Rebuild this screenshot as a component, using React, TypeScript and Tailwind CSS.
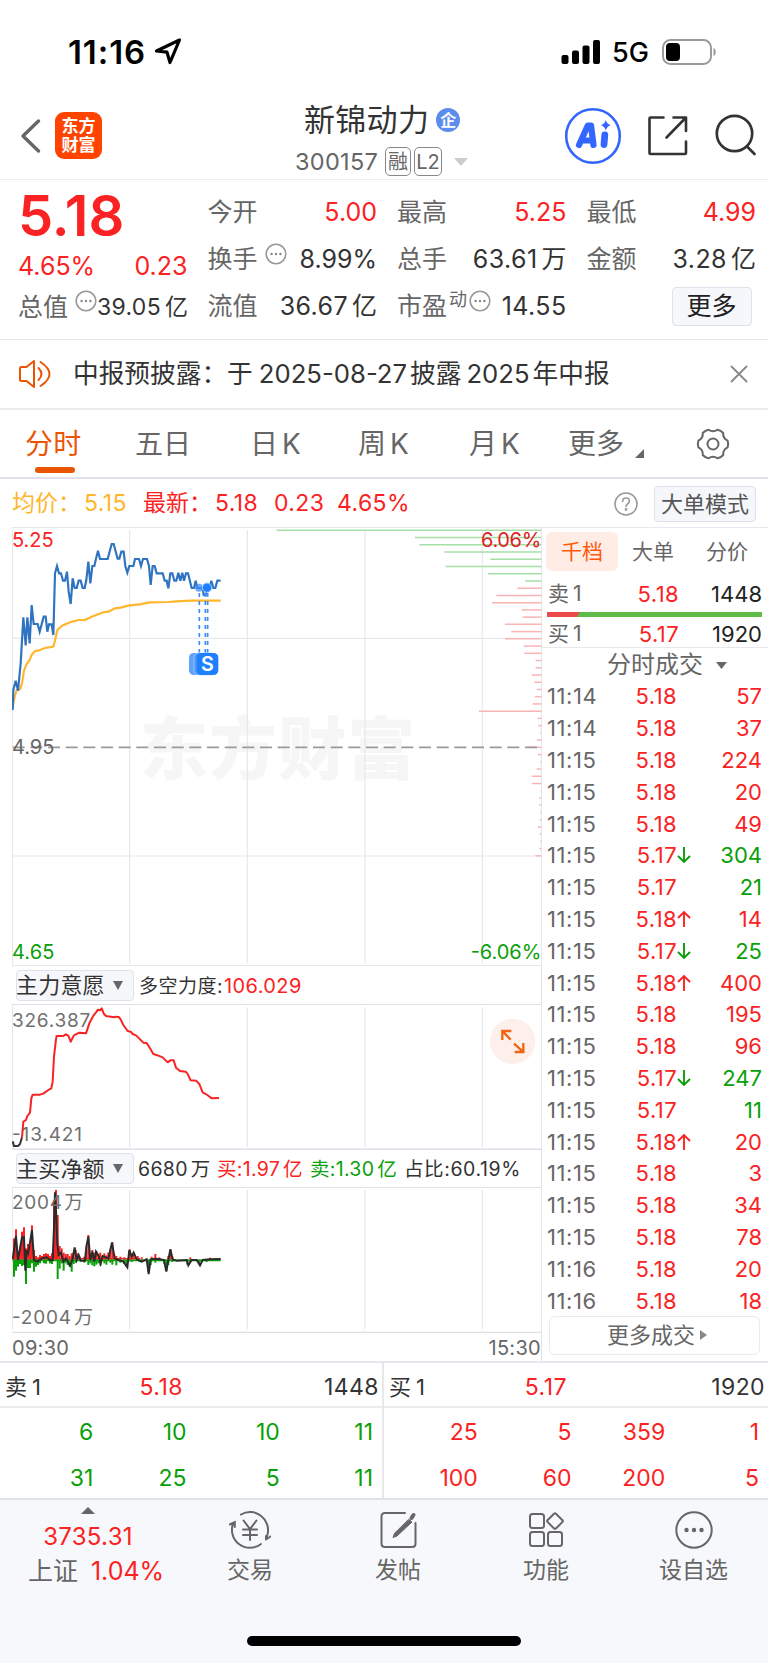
import React from 'react';

type Side = 'red' | 'green';

interface Trade {
  time: string;
  price: string;
  qty: string;
  side: Side;
  dir?: 'up' | 'down';
}

const trades: Trade[] = [
  { time: '11:14', price: '5.18', qty: '57', side: 'red' },
  { time: '11:14', price: '5.18', qty: '37', side: 'red' },
  { time: '11:15', price: '5.18', qty: '224', side: 'red' },
  { time: '11:15', price: '5.18', qty: '20', side: 'red' },
  { time: '11:15', price: '5.18', qty: '49', side: 'red' },
  { time: '11:15', price: '5.17', qty: '304', side: 'green', dir: 'down' },
  { time: '11:15', price: '5.17', qty: '21', side: 'green' },
  { time: '11:15', price: '5.18', qty: '14', side: 'red', dir: 'up' },
  { time: '11:15', price: '5.17', qty: '25', side: 'green', dir: 'down' },
  { time: '11:15', price: '5.18', qty: '400', side: 'red', dir: 'up' },
  { time: '11:15', price: '5.18', qty: '195', side: 'red' },
  { time: '11:15', price: '5.18', qty: '96', side: 'red' },
  { time: '11:15', price: '5.17', qty: '247', side: 'green', dir: 'down' },
  { time: '11:15', price: '5.17', qty: '11', side: 'green' },
  { time: '11:15', price: '5.18', qty: '20', side: 'red', dir: 'up' },
  { time: '11:15', price: '5.18', qty: '3', side: 'red' },
  { time: '11:15', price: '5.18', qty: '34', side: 'red' },
  { time: '11:15', price: '5.18', qty: '78', side: 'red' },
  { time: '11:16', price: '5.18', qty: '20', side: 'red' },
  { time: '11:16', price: '5.18', qty: '18', side: 'red' },
];

const sellQueue = [
  ['6', '10', '10', '11'],
  ['31', '25', '5', '11'],
];
const buyQueue = [
  ['25', '5', '359', '1'],
  ['100', '60', '200', '5'],
];

// Chart data is kept in chart units, three per pixel
const priceLine =
  '38,570 40,510 47,482 54,512 62,430 70,292 77,376 82,292 89,370 95,255 101,312 113,312 119,335 131,290 137,290 142,335 147,313 155,313 160,345 165,160 171,138 177,160 183,160 189,182 195,182 201,155 206,215 212,252 218,175 224,204 230,204 236,182 242,182 248,204 254,204 259,180 265,125 271,190 277,138 283,138 288,116 294,92 300,117 323,117 335,72 341,72 353,116 358,116 364,95 371,95 376,138 382,158 388,138 400,138 405,117 417,117 423,138 429,117 441,117 447,138 452,195 458,138 464,138 470,160 488,160 494,182 500,182 505,205 511,160 517,160 523,182 529,182 535,158 541,182 547,158 552,182 558,160 564,160 575,204 582,204 587,182 592,204 608,204 611,225 617,225 622,204 629,204 634,182 640,204 646,204 652,182 662,182';

const avgLine =
  '38,560 44,530 50,510 60,508 66,490 72,452 80,432 88,422 95,405 105,393 118,391 135,384 160,380 165,362 172,330 185,318 205,309 220,304 235,300 255,300 275,290 310,277 325,275 345,265 362,263 388,256 420,253 430,251 450,247 505,246 530,244 570,242 662,242';

const powerLine =
  '66,592 70,545 78,540 82,528 90,518 94,475 98,464 120,464 130,461 145,450 154,445 158,425 162,350 168,298 170,288 190,288 197,283 205,287 212,305 222,286 238,278 258,280 268,250 280,227 290,215 294,209 300,211 305,205 312,222 318,228 342,232 347,230 356,231 362,238 370,255 383,273 392,275 398,282 408,286 430,308 440,309 450,325 460,342 475,347 488,352 503,367 511,361 521,361 528,383 540,393 557,395 562,400 572,421 588,422 598,432 608,457 622,465 635,475 657,474';

const netLine =
  '38,328 48,258 54,330 66,262 72,262 76,362 80,300 84,310 88,290 96,240 102,330 112,335 125,325 140,322 150,330 158,330 162,230 165,127 168,180 172,280 176,315 183,308 190,335 198,325 210,347 217,330 224,292 230,330 236,315 242,332 255,332 259,290 265,260 271,330 277,305 283,335 288,305 296,318 302,340 308,318 325,325 336,278 344,325 355,330 370,335 382,352 388,300 395,320 401,308 410,328 425,335 440,328 446,372 452,328 465,326 480,328 492,330 499,365 505,330 511,298 518,328 530,332 560,330 565,346 575,330 590,330 600,346 608,330 630,328 662,327';

// left ends of the price distribution bars, one every 21.7 units
const priceDist = [
  830, 1245, 1258, 1333, 1471, 1337, 1464, 1575, 1552, 1489, 1476, 1565, 1567, 1515, 1534, 1515, 1571, 1573, 1607, 1607, 1595,
  1603, 1610, 1605, 1598, 1437, 1612, 1615, 1621, 1611, 1583, 1614, 1621, 1610, 1595, 1596, 1622, 1618, 1618, 1621, 1619, 1614,
  1619, 1621, 1618, 1606,
];

const buyBars = [
  [42, 265], [48, 238], [54, 315], [60, 292], [66, 245], [72, 232], [78, 295], [84, 282], [90, 284], [96, 226], [102, 300],
  [108, 318], [114, 322], [120, 315], [126, 318], [132, 312], [138, 310], [144, 312], [150, 318], [156, 310], [162, 150],
  [168, 120], [173, 195], [179, 288], [185, 295], [191, 308], [197, 312], [203, 312], [209, 318], [215, 310], [221, 308],
  [227, 300], [233, 310], [239, 320], [253, 320], [259, 300], [265, 255], [271, 312], [277, 300], [283, 308], [289, 304],
  [295, 312], [301, 308], [307, 318], [313, 310], [319, 316], [325, 308], [331, 300], [337, 276], [343, 314], [349, 318],
  [361, 320], [373, 322], [389, 298], [395, 316], [401, 308], [413, 318], [425, 322], [455, 320], [466, 312], [478, 322],
  [505, 318], [511, 298], [517, 320], [571, 322], [630, 323],
];

const sellBars = [
  [42, 380], [48, 362], [54, 350], [60, 342], [66, 348], [72, 345], [78, 402], [84, 354], [90, 354], [96, 340], [102, 365],
  [108, 350], [114, 345], [120, 340], [132, 340], [138, 341], [150, 340], [156, 342], [173, 387], [179, 356], [185, 340],
  [191, 362], [197, 340], [203, 345], [209, 350], [215, 365], [221, 342], [227, 338], [253, 338], [265, 345], [271, 340],
  [277, 346], [283, 349], [289, 344], [295, 340], [301, 347], [313, 340], [319, 344], [331, 338], [337, 344], [349, 346],
  [361, 338], [373, 342], [379, 350], [395, 336], [419, 336], [446, 366], [452, 345], [466, 338], [493, 342], [499, 362],
  [505, 345], [517, 336], [562, 344], [571, 336], [598, 342], [620, 336],
];

const Dots: React.FC<{ className?: string }> = ({ className }) => (
  <svg width="22" height="22" viewBox="0 0 22 22" className={className}>
    <circle cx="11" cy="11" r="9.8" fill="none" stroke="#999" strokeWidth="1.6" />
    <circle cx="6.6" cy="11" r="1.2" fill="#888" />
    <circle cx="11" cy="11" r="1.2" fill="#888" />
    <circle cx="15.4" cy="11" r="1.2" fill="#888" />
  </svg>
);

const StatusBar: React.FC = () => (
  <div className="flex h-[100px] items-start justify-between pl-[68px] pr-[51px] pt-[34px]">
    <div className="flex h-[34px] items-center text-black">
      <span className="w-[86px] whitespace-nowrap pt-[2px] text-[33px] font-semibold leading-none tracking-[0.9px]">11:16</span>
      <svg width="28" height="28" viewBox="0 0 28 28">
        <path d="M25.500 3 2.500 14l10.500 1.200L16 25.500z" fill="none" stroke="#000" strokeWidth="3.2" strokeLinejoin="round" />
      </svg>
    </div>
    <div className="flex h-[35px] items-center text-black">
      <svg width="40" height="26" viewBox="0 0 40 26">
        <rect x="0.5" y="16" width="7" height="9" rx="2" />
        <rect x="11" y="11.5" width="7" height="13.5" rx="2" />
        <rect x="21.5" y="6.5" width="7" height="18.5" rx="2" />
        <rect x="32" y="1" width="7" height="24" rx="2" />
      </svg>
      <span className="ml-[11px] w-[50px] pt-[2px] text-[27px] font-medium leading-none">5G</span>
      <svg width="55" height="28" viewBox="0 0 55 28">
        <rect x="1" y="2" width="48" height="24" rx="7.5" fill="none" stroke="#9b9b9b" strokeWidth="2" />
        <rect x="4" y="5" width="14" height="18" rx="4" fill="#000" />
        <path d="M51.500 10v8c3-1 3-7 0-8z" fill="#9b9b9b" />
      </svg>
    </div>
  </div>
);

const Header: React.FC = () => (
  <header className="flex h-20 items-start border-b border-[#ececec] pl-5">
    <svg width="22" height="36" viewBox="0 0 22 36" className="mt-[18px]">
      <path d="M18.500 3 3 18l15.500 15" fill="none" stroke="#666" strokeWidth="3.4" strokeLinecap="round" strokeLinejoin="round" />
    </svg>
    <div className="ml-[13px] mt-3 flex h-[47px] w-[47px] flex-col items-center justify-center rounded-[9px] bg-[#ff4400] text-[17px] font-bold leading-[19px] text-white">
      <span>东方</span>
      <span>财富</span>
    </div>
    <div className="ml-[194px] w-[172px]">
      <div className="flex h-[38px] items-center gap-[7px] pl-[8px]">
        <h1 className="shrink-0 text-[31px] leading-none tracking-[0.3px] text-[#333]">新锦动力</h1>
        <span className="mt-[1px] flex h-6 w-6 shrink-0 items-center justify-center rounded-full bg-[#5b8def] text-[16px] font-bold leading-none text-white">企</span>
      </div>
      <div className="mt-[7px] flex h-[33px] items-center text-[#666]">
        <span className="ml-[-1px] w-[90px] text-[23.5px] leading-none tracking-[0.3px]">300157</span>
        <span className="flex h-[29px] w-[26px] shrink-0 items-center justify-center rounded-[5px] border border-[#888] text-[20px] leading-none">融</span>
        <span className="ml-[3px] flex h-[29px] w-[28px] shrink-0 items-center justify-center rounded-[5px] border border-[#888] text-[20px] leading-none">L2</span>
        <svg width="14" height="8" viewBox="0 0 14 8" className="ml-3 shrink-0">
          <path d="M0 0h14L7 8z" fill="#ccc" />
        </svg>
      </div>
    </div>
    <svg width="58" height="58" viewBox="0 0 58 58" className="ml-[96px] mt-[7px]">
      <circle cx="29" cy="29" r="26.8" fill="none" stroke="#3366ff" strokeWidth="2.6" />
      <path d="M15 38 23.800 18.500h3.200L29.500 38M19.500 33.500h8.500" fill="none" stroke="#3366ff" strokeWidth="6.2" strokeLinejoin="round" strokeLinecap="round" />
      <path d="M40.800 28 40 37.500" stroke="#3366ff" strokeWidth="6.8" strokeLinecap="round" />
      <path d="M41.800 13q1 3.800 4.800 5.200-3.800 1.400-4.800 5.200-1-3.800-4.800-5.200 3.800-1.400 4.800-5.200z" fill="#3366ff" />
    </svg>
    <svg width="42" height="42" viewBox="0 0 42 42" className="ml-[25px] mt-[15px]" fill="none" stroke="#333" strokeWidth="2.6" strokeLinecap="round" strokeLinejoin="round">
      <path d="M16.500 2.500H3.500q-1 0-1 1V38q0 1 1 1H38q1 0 1-1V26.500" />
      <path d="M26.500 2.500H39V16M38.500 3 19.500 22.500" />
    </svg>
    <svg width="44" height="44" viewBox="0 0 44 44" className="ml-[25px] mt-[14px]" fill="none" stroke="#333" strokeWidth="2.7" strokeLinecap="round">
      <circle cx="20.5" cy="19.5" r="17.7" />
      <path d="m33 32.500 7.500 7.500" />
    </svg>
  </header>
);

const Quote: React.FC<{ label: string; value: string; unit?: string; color?: string; children?: React.ReactNode }> = ({
  label,
  value,
  unit,
  color = 'text-[#333] tracking-[0.4px]',
  children,
}) => (
  <div className="flex h-[47px] items-center">
    <span className="text-[25px] leading-none text-[#666]">{label}</span>
    {children}
    <span className={`ml-auto text-[25px] leading-none ${color}`}>
      {value}
      {unit && <span className="ml-[4px] tracking-normal">{unit}</span>}
    </span>
  </div>
);

const QuotePanel: React.FC = () => (
  <section className="grid h-40 grid-cols-4 gap-x-5 border-b border-[#e8e8ea] pl-[18px] pr-[12px] pt-[9px]">
    <div className="text-[25px] leading-none text-[#fa2222]">
      <div className="flex h-[54px] items-center text-[56px] font-semibold">5.18</div>
      <div className="flex h-[46px] items-center justify-between pt-px">
        <span>4.65%</span>
        <span>0.23</span>
      </div>
      <div className="flex h-9 items-center whitespace-nowrap text-[#333]">
        <span className="text-[#666]">总值</span>
        <Dots className="mb-3 ml-[7px] shrink-0" />
        <span className="ml-auto pt-px text-[23px] tracking-[0.3px]">
          39.05<span className="ml-[4px] tracking-normal">亿</span>
        </span>
      </div>
    </div>
    <div>
      <Quote label="今开" value="5.00" color="text-[#fa2222]" />
      <Quote label="换手" value="8.99%" color="text-[#333]">
        <Dots className="mb-3 ml-[7px]" />
      </Quote>
      <Quote label="流值" value="36.67" unit="亿" />
    </div>
    <div>
      <Quote label="最高" value="5.25" color="text-[#fa2222]" />
      <Quote label="总手" value="63.61" unit="万" />
      <Quote label="市盈" value="14.55">
        <span className="mb-[14px] ml-[2px] text-[18px] leading-none text-[#666]">动</span>
        <Dots className="mb-3 ml-[2px]" />
      </Quote>
    </div>
    <div>
      <Quote label="最低" value="4.99" color="text-[#fa2222]" />
      <Quote label="金额" value="3.28" unit="亿" />
      <div className="flex h-[47px] items-center justify-end pr-1">
        <button className="h-[39px] w-20 rounded-[4px] border border-[#dfe2ea] bg-[#f6f7fa] pr-px text-[25px] leading-none text-[#222]">更多</button>
      </div>
    </div>
  </section>
);

const Notice: React.FC = () => (
  <div className="flex h-[70px] items-center border-b-2 border-[#ececf0] pl-[18px] pr-5">
    <svg width="34" height="30" viewBox="0 0 34 30" fill="none" stroke="#ea5504" strokeWidth="2" strokeLinecap="round" strokeLinejoin="round">
      <path d="M2 9.500q0-1.500 1.500-1.500h5L16 2v26l-7.500-6h-5Q2 22 2 20.500z" />
      <path d="M20.500 9q6 6 0 12M22.500 3q18 12 0 24" />
    </svg>
    <p className="ml-[21px] flex text-[25.7px] leading-none text-[#333]">
      <span>中报预披露：于</span>
      <span className="ml-[6px]">2025-08-27</span>
      <span className="ml-[3px]">披露</span>
      <span className="ml-[5px]">2025</span>
      <span className="ml-[3px]">年中报</span>
    </p>
    <svg width="18" height="18" viewBox="0 0 18 18" className="ml-auto">
      <path d="m1.500 1.500 15 15m0-15-15 15" stroke="#888" strokeWidth="1.8" strokeLinecap="round" />
    </svg>
  </div>
);

const Tabs: React.FC = () => (
  <nav className="flex h-[69px] items-center border-b-2 border-[#e0e1e8] pl-[25px] text-[28px] leading-none text-[#666]">
    <div className="flex h-full w-[110px] flex-col">
      <span className="mt-[20px] tracking-[0.3px] text-[#ea5504]">分时</span>
      <span className="ml-[10px] mt-[9px] h-[6px] w-10 shrink-0 rounded-full bg-[#ea5504]" />
    </div>
    <span className="w-[115px]">五日</span>
    <span className="w-[108px]">日<span className="ml-[4px]">K</span></span>
    <span className="w-[111px]">周<span className="ml-[4px]">K</span></span>
    <span className="w-[99px]">月<span className="ml-[4px]">K</span></span>
    <span className="w-[67px]">更多</span>
    <svg width="9" height="9" viewBox="0 0 9 9" className="mt-[20px]">
      <path d="M9 0v9H0z" fill="#666" />
    </svg>
    <svg width="34" height="34" viewBox="-17 -17 34 34" className="ml-[52px]" fill="none" stroke="#666" strokeWidth="2" strokeLinejoin="round">
      <path d="M14.6-3.4Q15.8 0 14.6 3.4Q9.8 5.6 10.2 11Q7.9 13.7 4.4 14.3Q0 11.2 -4.4 14.3Q-7.9 13.7 -10.2 11Q-9.8 5.6 -14.6 3.4Q-15.8 0 -14.6-3.4Q-9.8-5.6 -10.2-11Q-7.9-13.7 -4.4-14.3Q0-11.2 4.4-14.3Q7.9-13.7 10.2-11Q9.8-5.6 14.6-3.4Z" />
      <circle r="5.5" />
    </svg>
  </nav>
);

const InfoRow: React.FC = () => (
  <div className="flex h-[48px] items-center pl-[12px] pr-[12px] pt-px text-[23px] leading-none tracking-[0.4px] text-[#fa2222]">
    <span className="w-[72px] tracking-normal text-[#ffb62e]">均价：</span>
    <span className="w-[59px] text-[#ffb62e]">5.15</span>
    <span className="w-[72px] tracking-normal">最新：</span>
    <span className="w-[59px]">5.18</span>
    <span className="w-[63px]">0.23</span>
    <span>4.65%</span>
    <svg width="24" height="24" viewBox="0 0 24 24" className="ml-auto" fill="none" stroke="#999" strokeWidth="1.6" strokeLinecap="round">
      <circle cx="12" cy="12" r="11" />
      <path d="M8.600 9.500q0-3.500 3.400-3.500t3.400 3.200q0 1.600-1.900 2.800-1.500 1-1.500 2.400" />
      <circle cx="12" cy="17.5" r=".6" fill="#999" />
    </svg>
    <button className="ml-4 h-9 w-[102px] whitespace-nowrap rounded-[4px] border border-[#dfe2ea] bg-[#f6f7fa] text-[22px] leading-none tracking-normal text-[#555]">大单模式</button>
  </div>
);

const PriceChart: React.FC = () => (
  <svg width="530" height="439" viewBox="36 21 1590 1317" className="block">
    <g fill="#f6f6f6" fontSize="204" fontWeight="900">
      <text x="420" y="762" textLength="826">东方财富</text>
    </g>
    <g stroke="#e6e8ee" strokeWidth="3.5" fill="none">
      <path d="M36 22.500H1626M36 1336.500H1626M37.500 21V1338M1624.500 21V1338" />
      <path d="M389 30V1330M742 30V1330M1095 30V1330M1447 30V1330M38 355H1624M38 1008H1624" />
    </g>
    {priceDist.map((x, i) => (
      <path key={i} d={`M${x} ${31 + i * 21.7}H1624`} stroke={i < 8 ? '#a6dfa6' : '#fab4b4'} strokeWidth="4.5" />
    ))}
    <path d="M38 682H1614" stroke="#9a9a9d" strokeWidth="5" strokeDasharray="36 17" />
    <polyline points={avgLine} fill="none" stroke="#ffb62e" strokeWidth="6.5" strokeLinejoin="round" />
    <polyline points={priceLine} fill="none" stroke="#2f74c0" strokeWidth="6.5" />
    <g stroke="#3c8bfa" strokeWidth="5" strokeDasharray="12 12">
      <path d="M598 219V398M616 219V398M623 219V398" />
    </g>
    <circle cx="597" cy="203" r="12" fill="#3c8bfa" opacity=".75" />
    <circle cx="621" cy="203" r="14" fill="#1f80ff" stroke="#a9d0ff" strokeWidth="3" />
    <rect x="567" y="399" width="66" height="66" rx="14" fill="#5fa2fc" />
    <rect x="582" y="399" width="66" height="66" rx="14" fill="#4c97fd" stroke="#b9d8ff" strokeWidth="2" />
    <rect x="590" y="399" width="65" height="66" rx="14" fill="#1f80ff" />
    <text x="622" y="453" fontSize="59" fontWeight="600" fill="#fff" textAnchor="middle">S</text>
    <g fontSize="60">
      <text x="36" y="82" fill="#fa2222" textLength="125">5.25</text>
      <text x="1624" y="82" fill="#e02020" textAnchor="end" textLength="181">6.06%</text>
      <text x="36" y="701" fill="#666" textLength="127">4.95</text>
      <text x="36" y="1318" fill="#09a009" textLength="127">4.65</text>
      <text x="1624" y="1318" fill="#09a009" textAnchor="end" textLength="212">-6.06%</text>
    </g>
  </svg>
);

const IndicatorBar: React.FC<{ name: string; className: string; children: React.ReactNode }> = ({ name, className, children }) => (
  <div className={`flex items-center border-b border-[#e0e1e8] pl-1 text-[19px] leading-none ${className}`}>
    <button className="flex h-[31px] w-[118px] shrink-0 items-center rounded-[4px] border border-[#dfe2ea] bg-[#f6f7fa] text-[22px] leading-none text-[#333]">
      <span className="ml-[-1px] whitespace-nowrap tracking-[0.2px]">{name}</span>
      <svg width="10" height="9" viewBox="0 0 10 9" className="ml-[8px] shrink-0">
        <path d="M0 0h10L5 9z" fill="#666" />
      </svg>
    </button>
    {children}
  </div>
);

const PowerChart: React.FC = () => (
  <svg width="530" height="145" viewBox="36 195 1590 435" className="block">
    <g stroke="#e6e8ee" strokeWidth="3.5">
      <path d="M37.500 195V628M389 202V622M742 202V622M1095 202V622M1447 202V622M1624.500 195V628" />
      <path d="M36 628H1626" stroke="#dfe0e7" strokeWidth="5" />
    </g>
    <g fontSize="57" fill="#707070">
      <text x="36" y="260" textLength="235">326.387</text>
      <text x="36" y="603" textLength="210">-13.421</text>
    </g>
    <path d="M38 604 42 618H54L60 612 66 592" fill="none" stroke="#333" strokeWidth="6" />
    <polyline points={powerLine} fill="none" stroke="#fa2222" strokeWidth="6" strokeLinejoin="round" />
    <circle cx="1538" cy="304" r="68" fill="#fdf0ea" />
    <path d="M1507 300V273H1534M1509 275 1532 299M1544 336H1570V309M1568 334 1542 311" fill="none" stroke="#f06414" strokeWidth="7" />
  </svg>
);

const NetChart: React.FC = () => (
  <svg width="530" height="145" viewBox="36 114 1590 435" className="block">
    <g stroke="#e6e8ee" strokeWidth="3.5">
      <path d="M37.500 114V538M389 120V538M742 120V538M1095 120V538M1447 120V538M1624.500 114V549" />
      <path d="M36 547H1626" stroke="#dfe0e7" strokeWidth="4" />
    </g>
    {buyBars.map(([x, y]) => (
      <rect key={x} x={x - 3} y={y} width="6" height={329 - y} fill="#fa2222" />
    ))}
    {sellBars.map(([x, y]) => (
      <rect key={x} x={x - 3} y="329" width="6" height={y - 329} fill="#09a009" />
    ))}
    <path d="M38 331H662" stroke="#09a009" strokeWidth="5" />
    <path d="M38 326H420" stroke="#fa2222" strokeWidth="4" />
    <polyline points={netLine} fill="none" stroke="#2b2b2b" strokeWidth="6" />
    <g fontSize="57" fill="#707070">
      <text x="36" y="178" textLength="150">2004</text>
      <text x="193" y="178">万</text>
      <text x="36" y="521" textLength="177">-2004</text>
      <text x="222" y="521">万</text>
    </g>
  </svg>
);

const ChartColumn: React.FC = () => (
  <div className="w-[530px] shrink-0">
    <PriceChart />
    <IndicatorBar name="主力意愿" className="h-[39px] border-r">
      <span className="ml-[5px] whitespace-nowrap pt-[2px] tracking-[0.5px] text-[#333]">多空力度:</span>
      <span className="ml-px pt-[2px] text-[20px] tracking-[0.4px] text-[#fa2222]">106.029</span>
    </IndicatorBar>
    <PowerChart />
    <IndicatorBar name="主买净额" className="h-[38px] border-r">
      <div className="flex pt-[2px] text-[19.5px] tracking-[0.3px]">
        <span className="ml-[4px] w-[79px] whitespace-nowrap text-[#333]">6680<span className="ml-[3px]">万</span></span>
        <span className="w-[93px] whitespace-nowrap text-[#fa2222]">买:1.97<span className="ml-[3px]">亿</span></span>
        <span className="w-[94px] whitespace-nowrap text-[#09a009]">卖:1.30<span className="ml-[3px]">亿</span></span>
        <span className="whitespace-nowrap tracking-[0.6px] text-[#333]">占比:60.19%</span>
      </div>
    </IndicatorBar>
    <NetChart />
    <div className="flex h-7 items-center justify-between border-r border-[#e0e1e8] pt-[2px] text-[20px] leading-none tracking-[0.3px] text-[#666]">
      <span>09:30</span>
      <span>15:30</span>
    </div>
  </div>
);

const Arrow: React.FC<{ dir: 'up' | 'down' }> = ({ dir }) => (
  <svg width="14" height="18" viewBox="0 0 14 18" fill="none" strokeWidth="1.9" stroke={dir === 'up' ? '#fa2222' : '#09a009'}>
    <path d={dir === 'up' ? 'M7 17V2M1 8l6-6 6 6' : 'M7 1v15M1 10l6 6 6-6'} />
  </svg>
);

const OrderColumn: React.FC = () => (
  <div className="w-[226px] border-t border-[#e6e8ee] text-[22px] leading-none">
    <div className="flex h-[47px] items-center pl-1 text-[21px] text-[#666]">
      <span className="flex h-[39px] w-[72px] items-center justify-center rounded-[6px] bg-[#ffece4] text-[#ff5a0a]">千档</span>
      <span className="ml-[14px] w-[74px]">大单</span>
      <span>分价</span>
    </div>
    <div className="flex h-[37px] items-center pl-[6px] pr-[6px]">
      <span className="w-[60px] text-[21px] text-[#666]">卖<span className="ml-[4px]">1</span></span>
      <span className="w-[71px] text-right tracking-[0.4px] text-[#fa2222]">5.18</span>
      <span className="ml-auto text-[#222]">1448</span>
    </div>
    <div className="ml-[5px] mr-[6px] flex h-[5px] bg-[#5dbb46]">
      <span className="h-full w-[33px] bg-[#ea4a4a] [clip-path:polygon(0_0,100%_0,90%_100%,0_100%)]" />
    </div>
    <div className="flex h-[31px] items-center border-b border-[#e6e8ee] pl-[6px] pr-[6px] pt-[3px]">
      <span className="w-[60px] text-[21px] text-[#666]">买<span className="ml-[4px]">1</span></span>
      <span className="w-[71px] text-right tracking-[0.4px] text-[#fa2222]">5.17</span>
      <span className="ml-auto text-[#222]">1920</span>
    </div>
    <div className="flex h-8 items-center pl-[65px] pt-[2px] text-[24px] text-[#666]">
      分时成交
      <svg width="11" height="7" viewBox="0 0 11 7" className="ml-[13px]">
        <path d="M0 0h11L5.500 7z" fill="#666" />
      </svg>
    </div>
    {trades.map((t, i) => (
      <div key={i} className="flex h-[31.8px] items-center pl-[5px] pr-[6px] pt-px">
        <span className="w-[60px] tracking-[0.6px] text-[#666]">{t.time}</span>
        <span className="w-[70px] text-right tracking-[0.4px] text-[#fa2222]">{t.price}</span>
        <span className="w-[16px]">{t.dir && <Arrow dir={t.dir} />}</span>
        <span className={`ml-auto ${t.side === 'red' ? 'text-[#fa2222]' : 'text-[#09a009]'}`}>{t.qty}</span>
      </div>
    ))}
    <button className="ml-[7px] flex h-[39px] w-[211px] items-center rounded-[6px] border border-[#ebebee] pl-[57px] text-[22px] leading-none text-[#666]">
      更多成交
      <svg width="7" height="10" viewBox="0 0 7 10" className="ml-[5px]">
        <path d="M0 0v10l7-5z" fill="#888" />
      </svg>
    </button>
  </div>
);

const Queue: React.FC<{ name: string; price: string; total: string; rows: string[][]; side: Side }> = ({ name, price, total, rows, side }) => (
  <div className={`w-1/2 text-[23px] leading-none ${side === 'green' ? 'border-r-2 border-[#e6e8ec]' : ''}`}>
    <div className="flex h-[45px] items-center border-b-2 border-[#ececf0] pl-[5px] pr-[3px] pt-[5px] text-[#333]">
      <span className="w-[55px] text-[22px]">{name}<span className="ml-[5px]">1</span></span>
      <span className="w-[123px] text-right tracking-[0.5px] text-[#fa2222]">{price}</span>
      <span className="ml-auto tracking-[0.4px]">{total}</span>
    </div>
    <div className={`pr-[9px] ${side === 'green' ? 'text-[#09a009]' : 'text-[#fa2222]'}`}>
      {rows.map((row, i) => (
        <div key={i} className="grid h-[46px] grid-cols-4 items-center pt-[2px] text-right">
          {row.map((n, j) => (
            <span key={j}>{n}</span>
          ))}
        </div>
      ))}
    </div>
  </div>
);

const iconProps = { width: 42, height: 42, viewBox: '0 0 42 42', fill: 'none', stroke: '#666', strokeWidth: 2 };

const BottomBar: React.FC = () => (
  <footer className="h-[165px] border-t-2 border-[#dfe2e8] bg-[#f7f8fb] text-[23px] leading-none text-[#666]">
    <div className="flex h-[98px]">
      <div className="flex w-[176px] flex-col items-center pt-[7px]">
        <svg width="14" height="7" viewBox="0 0 14 7">
          <path d="M0 7h14L7 0z" fill="#666" />
        </svg>
        <span className="mt-[11px] text-[24px] tracking-[0.3px] text-[#fa2222]">3735.31</span>
        <div className="mt-[8px] flex h-[28px] items-center pl-4 text-[25px]">
          <span className="whitespace-nowrap">上证</span>
          <span className="ml-[13px] text-[25px] text-[#fa2222]">1.04%</span>
        </div>
      </div>
      <div className="flex w-[148px] flex-col items-center pt-[9px]">
        <svg {...iconProps} strokeLinecap="round">
          <path d="M12 5.500A18 18 0 0 1 38.500 25.500L37 30.500M37 30.500l4.500-3M37 30.500v-3.500" />
          <path d="M32 35A18 18 0 0 1 4.500 13.500M0.800 15.500l5-2.500v5" />
          <path d="m14.500 11.500 6.500 8.500 6.500-8.500M21 20v11M14 20.500h14M14 26h14" />
        </svg>
        <span className="mt-2">交易</span>
      </div>
      <div className="flex w-[148px] flex-col items-center pt-[9px]">
        <svg {...iconProps} strokeLinecap="round">
          <path d="M28 4H8Q4.500 4 4.500 7.500v27Q4.500 38 8 38h27q3.500 0 3.500-3.500V14" />
          <path d="M36.500 6 34.500 9" strokeWidth="4" />
          <path d="m32 10.500 3 2.500-15 14-4 1.500 1.500-4z" fill="#666" strokeWidth="1" />
        </svg>
        <span className="mt-2">发帖</span>
      </div>
      <div className="flex w-[148px] flex-col items-center pt-[9px]">
        <svg {...iconProps}>
          <rect x="5" y="5" width="14" height="14" rx="2.5" />
          <rect x="5" y="23" width="14" height="14" rx="2.5" />
          <rect x="23" y="23" width="14" height="14" rx="2.5" />
          <path d="m29 4.800-6.500 6.500q-.8.800 0 1.600l6.500 6.500q1 .8 2 0l6.500-6.500q.8-.8 0-1.600L31 4.800q-1-.8-2 0z" />
        </svg>
        <span className="mt-2">功能</span>
      </div>
      <div className="flex w-[147px] flex-col items-center pt-[9px]">
        <svg {...iconProps}>
          <circle cx="21" cy="21" r="17.7" />
          <g fill="#666" stroke="none">
            <circle cx="13.5" cy="21" r="2.2" />
            <circle cx="21" cy="21" r="2.2" />
            <circle cx="28.5" cy="21" r="2.2" />
          </g>
        </svg>
        <span className="mt-2">设自选</span>
      </div>
    </div>
    <div className="mx-auto mt-[38px] h-[10px] w-[274px] rounded-full bg-black" />
  </footer>
);

export default function App() {
  return (
    <div className="h-[1663px] w-[768px] overflow-hidden bg-white font-['Inter','Noto_Sans_CJK_SC',sans-serif]">
      <StatusBar />
      <Header />
      <QuotePanel />
      <Notice />
      <Tabs />
      <InfoRow />
      <main className="flex h-[834px] pl-3">
        <ChartColumn />
        <OrderColumn />
      </main>
      <section className="flex h-[137px] border-t-2 border-[#e6e8ee]">
        <Queue name="卖" price="5.18" total="1448" rows={sellQueue} side="green" />
        <Queue name="买" price="5.17" total="1920" rows={buyQueue} side="red" />
      </section>
      <BottomBar />
    </div>
  );
}
